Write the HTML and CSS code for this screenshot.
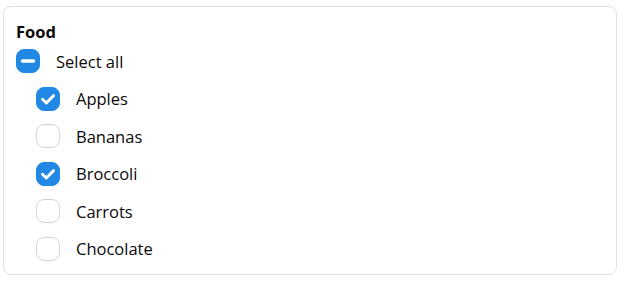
FILE: index.html
```html
<!DOCTYPE html>
<html lang="en">
<head>
    <meta charset="UTF-8">
    <title>Food</title>
    <link rel="stylesheet" href="styles.css">
</head>
<body>
    <div class="card">
        <div class="title">Food</div>
        <label class="row">
            <span class="box checked">
                <svg viewBox="0 0 24 24" width="24" height="24"><path d="M6.5 12h11" stroke="#fff" stroke-width="3.4" stroke-linecap="round"/></svg>
            </span>
            <span class="label">Select all</span>
        </label>
        <div class="children">
            <label class="row">
                <span class="box checked">
                    <svg viewBox="0 0 24 24" width="24" height="24"><path d="M6.5 12.3l3.8 3.7 7.2-7.3" fill="none" stroke="#fff" stroke-width="3" stroke-linecap="round" stroke-linejoin="round"/></svg>
                </span>
                <span class="label">Apples</span>
            </label>
            <label class="row">
                <span class="box"></span>
                <span class="label">Bananas</span>
            </label>
            <label class="row">
                <span class="box checked">
                    <svg viewBox="0 0 24 24" width="24" height="24"><path d="M6.5 12.3l3.8 3.7 7.2-7.3" fill="none" stroke="#fff" stroke-width="3" stroke-linecap="round" stroke-linejoin="round"/></svg>
                </span>
                <span class="label">Broccoli</span>
            </label>
            <label class="row">
                <span class="box"></span>
                <span class="label">Carrots</span>
            </label>
            <label class="row">
                <span class="box"></span>
                <span class="label">Chocolate</span>
            </label>
        </div>
    </div>
</body>
</html>
```

FILE: styles.css
```css
body {
    margin: 0;
    padding: 6px 7px 8px 3px;
    font-family: "Open Sans", "Noto Sans", Arial, sans-serif;
    color: #0a0a0a;
    background: #fff;
}
.card {
    border: 1px solid #e0e0e6;
    border-radius: 8px;
    padding: 14px 12px 8px 12px;
    box-sizing: border-box;
    height: 269px;
}
.title {
    font-size: 16.5px;
    font-weight: 700;
    line-height: 22px;
    margin-bottom: 6px;
}
.row {
    display: flex;
    align-items: center;
    gap: 16px;
    height: 24px;
    margin-bottom: 13.6px;
    font-size: 16.5px;
}
.children {
    padding-left: 20px;
}
.box {
    width: 24px;
    height: 24px;
    box-sizing: border-box;
    border: 1px solid #d2d6dc;
    border-radius: 8px;
    display: flex;
    flex-shrink: 0;
}
.box.checked {
    background: #2189e5;
    border-color: #2189e5;
}
.box svg {
    margin: -1px;
}
```
